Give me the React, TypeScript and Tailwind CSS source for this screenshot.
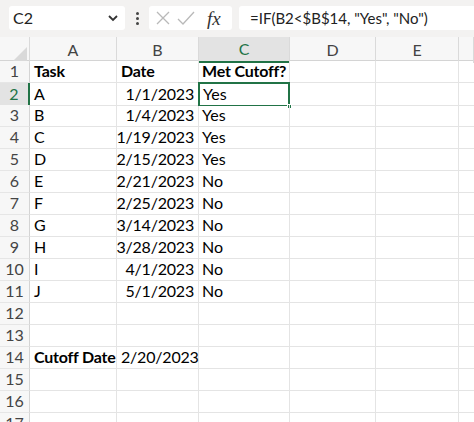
const rows: [string, string, string][] = [
  ['Task', 'Date', 'Met Cutoff?'],
  ['A', '1/1/2023', 'Yes'],
  ['B', '1/4/2023', 'Yes'],
  ['C', '1/19/2023', 'Yes'],
  ['D', '2/15/2023', 'Yes'],
  ['E', '2/21/2023', 'No'],
  ['F', '2/25/2023', 'No'],
  ['G', '3/14/2023', 'No'],
  ['H', '3/28/2023', 'No'],
  ['I', '4/1/2023', 'No'],
  ['J', '5/1/2023', 'No'],
  ['', '', ''],
  ['', '', ''],
  ['Cutoff Date', '2/20/2023', ''],
  ['', '', ''],
  ['', '', ''],
  ['', '', ''],
]

const cols = ['A', 'B', 'C', 'D', 'E', '']

const grid = 'grid grid-cols-[30px_87px_82px_91px_86px_83px_1fr]'

export default function App() {
  return (
    <div className="w-[474px] h-[422px] overflow-hidden bg-white font-['Lato','Liberation_Sans',sans-serif] text-[16px] text-black">
      {/* formula bar */}
      <div className="h-[37px] bg-[#f3f2f1] flex items-start pt-[6px] pl-[9px]">
        <div className="w-[116px] h-[24px] bg-white rounded-[3px] flex items-center pl-[4px] pr-[6px]">
          <span className="text-[16px] text-[#222]">C2</span>
          <svg className="ml-auto" width="12" height="8" viewBox="0 0 12 8">
            <path d="M2 2 L6 6 L10 2" fill="none" stroke="#333" strokeWidth="1.8" />
          </svg>
        </div>
        <div className="w-[24px] h-[24px] flex flex-col items-center justify-center gap-[2px]">
          <span className="w-[3px] h-[3px] rounded-full bg-[#444]" />
          <span className="w-[3px] h-[3px] rounded-full bg-[#444]" />
          <span className="w-[3px] h-[3px] rounded-full bg-[#444]" />
        </div>
        <div className="w-[83px] h-[24px] bg-white rounded-[3px] flex items-center pl-[6px] gap-[6px]">
          <svg width="16" height="16" viewBox="0 0 16 16">
            <path d="M2 2 L14 14 M14 2 L2 14" stroke="#b9b9b9" strokeWidth="1.3" />
          </svg>
          <svg width="18" height="16" viewBox="0 0 18 16">
            <path d="M1 9 L6 14 L17 2" fill="none" stroke="#b9b9b9" strokeWidth="1.3" />
          </svg>
          <span className="ml-[6px] font-['Liberation_Serif',serif] italic text-[19px] leading-none text-[#333]">fx</span>
        </div>
        <div className="ml-[7px] flex-1 h-[24px] bg-white rounded-l-[3px] flex items-center pl-[11px] text-[15px] text-[#222]">
          =IF(B2&lt;$B$14, "Yes", "No")
        </div>
      </div>

      {/* column headers */}
      <div className={`${grid} h-[24px] bg-[#f7f7f7] border-b border-[#d4d4d4]`}>
        <div className="relative border-r border-[#dadada]">
          <svg className="absolute right-[2px] bottom-[2px]" width="14" height="14" viewBox="0 0 14 14">
            <path d="M14 0 L14 14 L0 14 Z" fill="#d9d9d9" />
          </svg>
        </div>
        {cols.map((c, i) => (
          <div
            key={i}
            className={`flex items-center justify-center border-r border-[#dadada] text-[16px] ${
              c === 'C' ? 'bg-[#e3e3e3] text-[#217346] border-b-2 border-b-[#217346]' : 'text-[#444]'
            }`}
          >
            {c}
          </div>
        ))}
      </div>

      {/* rows */}
      {rows.map((r, i) => {
        const n = i + 1
        const bold = n === 1 || n === 14
        const sel = n === 2
        return (
          <div key={n} className={`${grid} h-[22px]`}>
            <div
              className={`flex items-end justify-center pb-[1px] text-[16px] leading-[20px] border-b border-[#e6e6e6] ${
                sel ? 'bg-[#e3e3e3] text-[#217346] border-r-2 border-r-[#217346]' : 'bg-[#f7f7f7] text-[#444] border-r border-r-[#d4d4d4]'
              }`}
            >
              {n}
            </div>
            <div
              className={`px-[4px] flex items-end pb-[1px] leading-[20px] whitespace-nowrap border-r border-b border-[#e4e4e4] ${
                bold ? 'font-bold tracking-[-0.2px]' : ''
              }`}
            >
              {r[0]}
            </div>
            <div
              className={`px-[4px] flex items-end pb-[1px] leading-[20px] whitespace-nowrap border-r border-b border-[#e4e4e4] tracking-[-0.2px] ${
                n === 1 ? 'font-bold justify-start' : n === 14 ? 'justify-start' : 'justify-end'
              }`}
            >
              {r[1]}
            </div>
            <div
              className={`relative px-[3px] flex items-end pb-[1px] leading-[20px] whitespace-nowrap border-b ${
                sel ? 'border-2 border-[#217346] -mt-[1px] -ml-[1px]' : 'border-r border-[#e4e4e4]'
              } ${bold ? 'font-bold tracking-[-0.2px]' : ''}`}
            >
              {r[2]}
              {sel && <span className="absolute -right-[4px] -bottom-[4px] w-[5px] h-[5px] bg-[#217346] border border-white" />}
            </div>
            <div className="border-r border-b border-[#e4e4e4]" />
            <div className="border-r border-b border-[#e4e4e4]" />
            <div className="border-b border-[#e4e4e4]" />
          </div>
        )
      })}
    </div>
  )
}
